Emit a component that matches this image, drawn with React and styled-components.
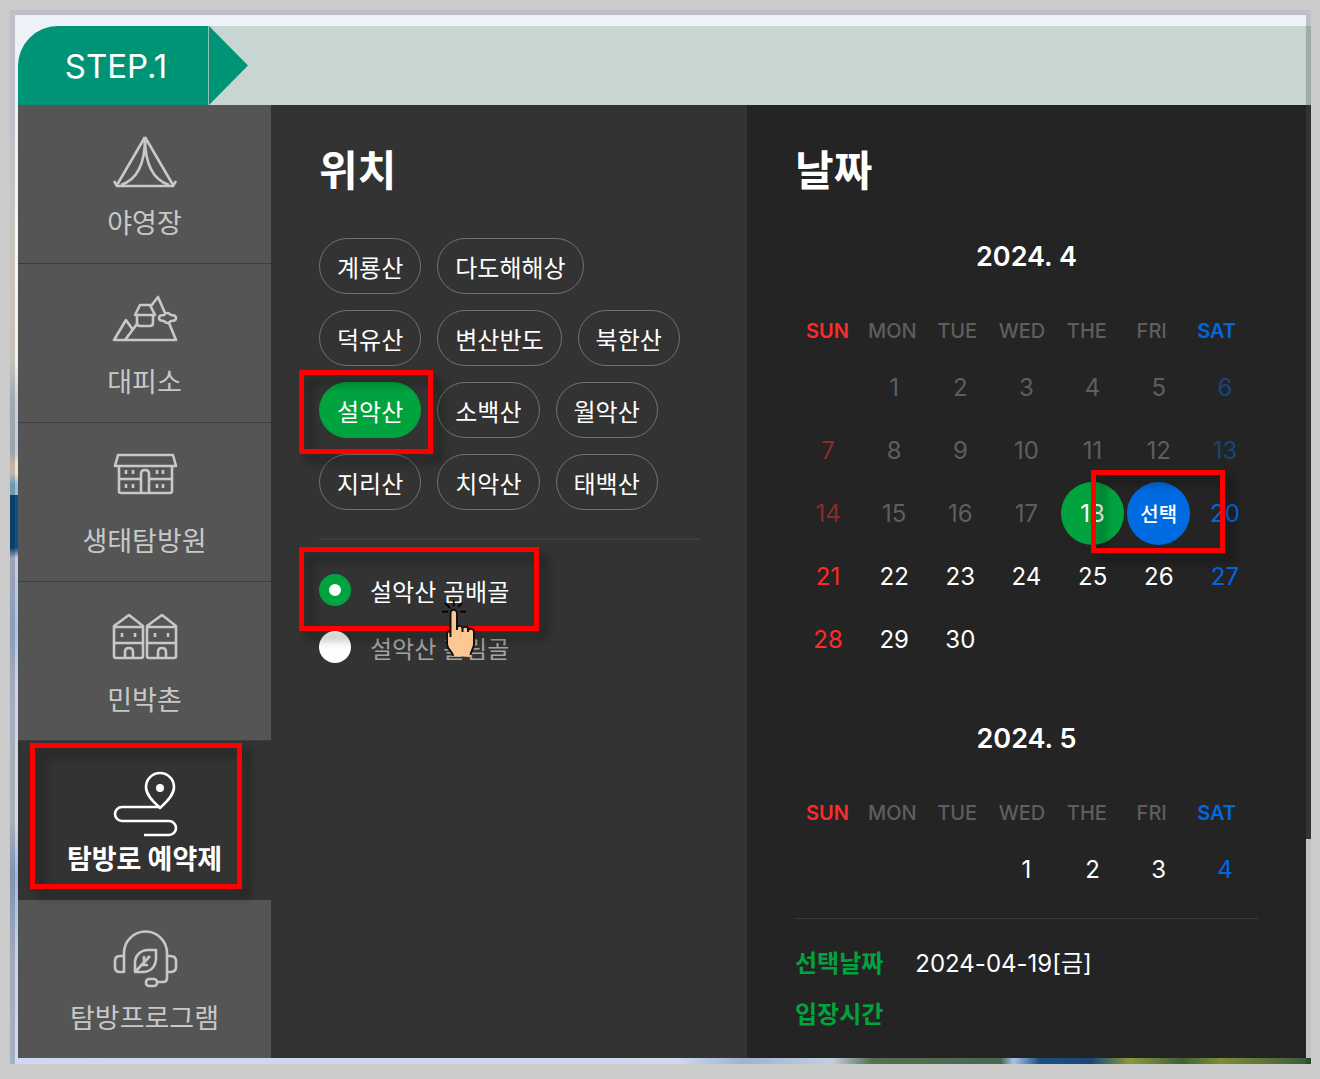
import React, { useState } from "react";
import styled, { createGlobalStyle, css } from "styled-components";

const GlobalStyle = createGlobalStyle`
  * {
    box-sizing: border-box;
  }
  body {
    margin: 0;
    background: #cbcbcb;
    color: #fff;
    font-family: Inter, "Noto Sans CJK KR", sans-serif;
  }
  button, input {
    font-family: inherit;
  }
`;

const menu = [
  { id: "camp", text: "야영장", icon: <TentIcon /> },
  { id: "shelter", text: "대피소", icon: <ShelterIcon /> },
  { id: "eco", text: "생태탐방원", icon: <EcoIcon /> },
  { id: "village", text: "민박촌", icon: <VillageIcon /> },
  { id: "trail", text: "탐방로 예약제", icon: <TrailIcon /> },
  { id: "program", text: "탐방프로그램", icon: <ProgramIcon /> },
];

const parks = [
  "계룡산",
  "다도해해상",
  "덕유산",
  "변산반도",
  "북한산",
  "설악산",
  "소백산",
  "월악산",
  "지리산",
  "치악산",
  "태백산",
];

const courses = ["설악산 곰배골", "설악산 흘림골"];

const weekdays = ["SUN", "MON", "TUE", "WED", "THE", "FRI", "SAT"];

const april = [
  [null, 1, 2, 3, 4, 5, 6],
  [7, 8, 9, 10, 11, 12, 13],
  [14, 15, 16, 17, 18, 19, 20],
  [21, 22, 23, 24, 25, 26, 27],
  [28, 29, 30, null, null, null, null],
];

const may = [[null, null, null, 1, 2, 3, 4]];

function TentIcon() {
  return (
    <Icon>
      <path d="M32 1 4 49M32 1l28 48M32 2c0 27-9 42-24 47M32 2c0 27 9 42 24 47" />
      <path d="M1 45l3 5h56l3-5" />
    </Icon>
  );
}

function ShelterIcon() {
  return (
    <Icon>
      <path d="M27 10h10l5 10H22z" />
      <path d="M24 20v8q0 3 3 3h10q3 0 3-3v-8" />
      <path d="M38 11l7-9 7 16M56 28l7 17H1l12-20 7 10M24 29 12 45" />
      <path d="M51 20q3-4 7 0 5 0 5 3t-5 3q-4 4-7 0-5 0-5-3t5-3z" />
    </Icon>
  );
}

function EcoIcon() {
  return (
    <Icon>
      <path d="M5 1h55l3 11H2z" />
      <path d="M6 12v25q0 2 2 2h49q2 0 2-2V12M6 25h22M36 25h23" />
      <path d="M28 39V20q0-4 4-4t4 4v19" />
      <path d="M13 16v4M20 16v4M44 16v4M50 16v4M13 30v4M20 30v4M44 30v4M50 30v4" />
    </Icon>
  );
}

function VillageIcon() {
  return (
    <Icon>
      {[0, 33].map((x) => (
        <g key={x} transform={`translate(${x} 0)`}>
          <path d="M1 13 16 2l14 11v30q0 2-2 2H3q-2 0-2-2zM1 14h29M1 30h29" />
          <path d="M12 45v-6q0-4 4-4t4 4v6M9 20v4M22 20v4" />
        </g>
      ))}
    </Icon>
  );
}

function TrailIcon() {
  return (
    <Icon>
      <path d="M47 36C38 28 33 22 33 15a14 14 0 0 1 28 0c0 7-5 13-14 21z" />
      <circle cx="47" cy="16" r="4" fill="currentColor" stroke="none" />
      <path d="M47 35H9a7 7 0 0 0 0 14h47a7 7 0 0 1 0 14H31" />
    </Icon>
  );
}

function ProgramIcon() {
  return (
    <Icon>
      <path d="M11 25v-3a21 21 0 0 1 43 0v25q0 4-4 4h-6" />
      <path d="M11 25H7q-5 0-5 5v6q0 5 5 5h4V25M54 25h3q6 0 6 5v6q0 5-6 5h-3" />
      <rect x="33" y="48" width="11" height="7" rx="3" />
      <path d="M22 41v-9c0-8 6-13 13-13h8v8c0 8-5 14-13 14zM22 41l15-16M31 25v6M28 34h7" />
    </Icon>
  );
}

const Pointer = () => (
  <PointerSvg viewBox="0 0 36 58" aria-hidden="true">
    <path
      d="M13.7 0v6M5 3l5 5M22 3l-4 4M2 11.7h6M20 11.7h6"
      stroke="#000"
      strokeWidth="1.8"
      fill="none"
    />
    <path
      d="M13 56c0-5-6-6-6-12V34c0-3 3-3 3.5-1v4V13a3 3 0 0 1 6.5 0v17-2c0-3 5.5-3 5.5 1v3-3c0-3 5.5-3 5.5 0v3-1c0-3 6-3 6 1v12c0 5-3 6-3.500 13z"
      fill="#fdc794"
    />
    <path
      d="M13 56c0-5-6-6-6-12V34c0-3 3-3 3.5-1v4V13a3 3 0 0 1 6.5 0v17-2c0-3 5.5-3 5.5 1v3-3c0-3 5.5-3 5.5 0v3-1c0-3 6-3 6 1v12c0 5-3 6-3.5 11"
      stroke="#111"
      strokeWidth="2"
      fill="none"
    />
  </PointerSvg>
);

function Icon({ children }) {
  return (
    <IconSvg viewBox="0 0 64 64" aria-hidden="true">
      {children}
    </IconSvg>
  );
}

const Calendar = ({ title, weeks, today, firstOpen, selected, onSelect }) => {
  return (
    <CalendarTable>
      <caption>{title}</caption>
      <thead>
        <tr>
          {weekdays.map((day) => (
            <th key={day} scope="col">
              {day}
            </th>
          ))}
        </tr>
      </thead>
      <tbody>
        {weeks.map((week, i) => (
          <tr key={i}>
            {week.map((day, j) => (
              <td key={j}>
                {day && (
                  <Day
                    type="button"
                    $column={j}
                    $today={day === today}
                    $selected={day === selected}
                    disabled={day < firstOpen}
                    onClick={() => onSelect && onSelect(day)}
                  >
                    {day === selected ? "선택" : day}
                  </Day>
                )}
                {day && day === selected && <DayMark />}
              </td>
            ))}
          </tr>
        ))}
      </tbody>
    </CalendarTable>
  );
};

const App = () => {
  const [category, setCategory] = useState("trail");
  const [park, setPark] = useState("설악산");
  const [course, setCourse] = useState(courses[0]);
  const [day, setDay] = useState(19);
  const weekday = ["일", "월", "화", "수", "목", "금", "토"][day % 7];

  return (
    <Frame>
      <GlobalStyle />
      <StepBar>
        <Step>STEP.1</Step>
        <StepArrow />
      </StepBar>
      <Main>
        <Sidebar>
          {menu.map(({ id, text, icon }) => (
            <MenuItem key={id}>
              <MenuButton
                type="button"
                $active={id === category}
                onClick={() => setCategory(id)}
              >
                {icon}
                {text}
              </MenuButton>
              {id === "trail" && <MenuMark />}
            </MenuItem>
          ))}
        </Sidebar>

        <Location>
          <Heading>위치</Heading>
          <Chips>
            {parks.map((name) => (
              <ChipItem key={name}>
                <Chip
                  type="button"
                  $active={name === park}
                  onClick={() => setPark(name)}
                >
                  {name}
                </Chip>
                {name === "설악산" && <ChipMark />}
              </ChipItem>
            ))}
          </Chips>
          <Courses>
            {courses.map((name, i) => (
              <Course key={name} $active={name === course}>
                <input
                  type="radio"
                  name="course"
                  checked={name === course}
                  onChange={() => setCourse(name)}
                />
                {name}
                {i === 0 && <CourseMark />}
                {i === 0 && <Pointer />}
              </Course>
            ))}
          </Courses>
        </Location>

        <DatePanel>
          <Heading>날짜</Heading>
          <Calendar
            title="2024. 4"
            weeks={april}
            today={18}
            firstOpen={18}
            selected={day}
            onSelect={setDay}
          />
          <Calendar title="2024. 5" weeks={may} firstOpen={1} />
          <Summary>
            <dt>선택날짜</dt>
            <dd>
              2024-04-{String(day).padStart(2, "0")}[{weekday}]
            </dd>
            <dt>입장시간</dt>
            <dd />
          </Summary>
        </DatePanel>
        <Rail />
      </Main>
      <Scenery />
    </Frame>
  );
};

const Frame = styled.div`
  position: relative;
  margin: 10px 9px 15px 10px;
  padding: 16px 0 0 8px;
  background: linear-gradient(
    #edf2f9 0%,
    #edf2f9 12%,
    #fbf6ee 22%,
    #f8f3e6 33%,
    #c9d3e0 37%,
    #c3cedd 42%,
    #f3e2cc 43%,
    #f3e2cc 44%,
    #8fc0e2 45%,
    #8fc0e2 46%,
    #0d4f87 46%,
    #0d4f87 51%,
    #c5cde6 52%,
    #aec4ec 59%,
    #ced6ea 64%,
    #d5dbea 77%,
    #9fb8e0 82%,
    #c9d5ee 90%,
    #cfdcf4 100%
  );

  &::after {
    content: "";
    position: absolute;
    inset: 0;
    border: 5px solid rgba(0, 0, 0, 0.2);
    border-bottom: 0;
    pointer-events: none;
  }
`;

const StepBar = styled.header`
  display: flex;
  height: 79px;
  background: #c9d5d2;
  border-top-left-radius: 40px;
`;

const Step = styled.div`
  display: flex;
  align-items: center;
  justify-content: center;
  width: 191px;
  padding-left: 6px;
  border-right: 1px solid #8fc4b7;
  border-top-left-radius: 40px;
  background: #009476;
  font-size: 33px;
`;

const StepArrow = styled.div`
  width: 39px;
  background: #009476;
  clip-path: polygon(0 0, 100% 50%, 0 100%);
`;

const Main = styled.main`
  display: grid;
  grid-template-columns: 253fr 476fr 559fr 5px;
`;

// red frame that points out a step of the guide
const Mark = styled.span`
  position: absolute;
  z-index: 2;
  border: 5px solid #f00;
  filter: drop-shadow(8px 8px 5px rgba(0, 0, 0, 0.4));
  pointer-events: none;
`;

const MenuMark = styled(Mark)`
  inset: 2px 29px 11px 12px;
`;

const ChipMark = styled(Mark)`
  inset: -12px -12px -16px -20px;
`;

const CourseMark = styled(Mark)`
  inset: -15px -30px -13px -20px;
`;

const DayMark = styled(Mark)`
  inset: -12px -33px -8px -35px;
`;

const Sidebar = styled.ul`
  margin: 0;
  padding: 0;
  list-style: none;
  background: #555;
`;

const MenuItem = styled.li`
  position: relative;
`;

const MenuButton = styled.button`
  display: flex;
  flex-direction: column;
  align-items: center;
  width: 100%;
  height: 159px;
  padding: 31px 0 0;
  border: 0;
  border-bottom: 1px solid #3d3d3d;
  background: #555;
  color: #c8c8c8;
  font-family: "Noto Sans CJK KR", sans-serif;
  font-size: 27px;
  line-height: 44px;
  cursor: pointer;

  ${MenuItem}:last-child & {
    height: 158px;
    border-bottom: 0;
  }

  ${({ $active }) =>
    $active &&
    css`
      border-color: #333;
      background: #333;
      color: #fff;
      font-weight: 700;
    `}
`;

const IconSvg = styled.svg`
  width: 64px;
  height: 64px;
  overflow: visible;
  fill: none;
  stroke: currentColor;
  stroke-width: 2.6;
  stroke-linejoin: round;
`;

const Location = styled.section`
  padding: 38px 47px 0 48px;
  background: #333;
`;

const Heading = styled.h2`
  margin: 0 0 39px;
  font-size: 42px;
  font-weight: 700;
  line-height: 56px;
`;

const Chips = styled.ul`
  display: flex;
  flex-wrap: wrap;
  gap: 16px;
  margin: 0;
  padding: 0 0 28px;
  border-bottom: 2px solid #3c3c3c;
  list-style: none;
`;

const ChipItem = styled.li`
  position: relative;
`;

const Chip = styled.button`
  height: 56px;
  padding: 0 17px;
  border: 1px solid ${({ $active }) => ($active ? "#00a33e" : "#727272")};
  border-radius: 28px;
  background: ${({ $active }) => ($active ? "#00a33e" : "transparent")};
  color: #fff;
  font-size: 24px;
  cursor: pointer;
`;

const Courses = styled.div`
  display: flex;
  flex-direction: column;
  align-items: flex-start;
  gap: 1px;
  padding-top: 22px;
`;

const Course = styled.label`
  position: relative;
  display: flex;
  align-items: center;
  gap: 19px;
  height: 56px;
  color: ${({ $active }) => ($active ? "#fff" : "#a3a3a3")};
  font-size: 24px;
  cursor: pointer;

  input {
    appearance: none;
    width: 32px;
    height: 32px;
    margin: 0;
    border-radius: 50%;
    background: #fff;
  }
  input:checked {
    border: 10px solid #00a33e;
  }
`;

const PointerSvg = styled.svg`
  position: absolute;
  z-index: 3;
  top: 38px;
  left: 121px;
  width: 36px;
  height: 58px;
`;

const DatePanel = styled.section`
  padding: 38px 48px 16px;
  background: #242424;
`;

const CalendarTable = styled.table`
  display: block;
  margin-bottom: 49px;

  & + & {
    margin-bottom: 17px;
  }
  caption {
    display: block;
    font-size: 27px;
    font-weight: 600;
    line-height: 38px;
  }
  thead,
  tbody {
    display: block;
  }
  tr {
    display: grid;
    grid-template-columns: repeat(7, 1fr);
  }
  thead tr {
    height: 50px;
    margin-top: 30px;
    padding-right: 9px;
  }
  th {
    padding: 0;
    color: #5e5e5e;
    font-size: 20px;
    font-weight: 500;
    line-height: 50px;
  }
  th:first-child {
    color: #ff2a2a;
    font-weight: 600;
  }
  th:last-child {
    color: #0068e0;
    font-weight: 600;
  }
  td {
    position: relative;
    display: flex;
    justify-content: center;
    padding: 0;
  }
`;

const dayColor = ({ $column }) =>
  $column === 0 ? "#ff2a2a" : $column === 6 ? "#0068e0" : "#fff";

const Day = styled.button`
  width: 63px;
  height: 63px;
  padding: 0;
  border: 0;
  border-radius: 50%;
  background: ${({ $today, $selected }) =>
    $selected ? "#006ae0" : $today ? "#00a33e" : "transparent"};
  color: ${({ $selected }) => ($selected ? "#fff" : dayColor)};
  font-size: ${({ $selected }) => ($selected ? "20px" : "24px")};
  font-weight: ${({ $selected }) => ($selected ? 500 : 400)};
  cursor: pointer;

  &:disabled {
    color: ${({ $column }) =>
      $column === 0 ? "#8a2a2a" : $column === 6 ? "#184478" : "#5e5e5e"};
    cursor: default;
  }
`;

const Summary = styled.dl`
  display: grid;
  grid-template-columns: auto 1fr;
  column-gap: 32px;
  margin: 0;
  padding-top: 19px;
  border-top: 1px solid #3c3c3c;
  font-size: 24px;
  line-height: 51px;

  dt {
    color: #00a33e;
    font-weight: 700;
  }
  dd {
    margin: 0;
  }
`;

const Rail = styled.div`
  background: linear-gradient(#404040 77%, #f3f3f3 77%);
`;

const Scenery = styled.div`
  height: 6px;
  background: linear-gradient(
    to right,
    #cddaf2 0%,
    #cdd8ee 42%,
    #cfdaee 51%,
    #9fb3cf 56%,
    #c3d0e2 63%,
    #55704f 66%,
    #496650 76%,
    #a9c3e8 77%,
    #1b4f83 79%,
    #1a4775 83%,
    #8c9a3c 86%,
    #3f6038 90%,
    #7d8c35 93%,
    #385a3c 100%
  );
`;

export default App;
